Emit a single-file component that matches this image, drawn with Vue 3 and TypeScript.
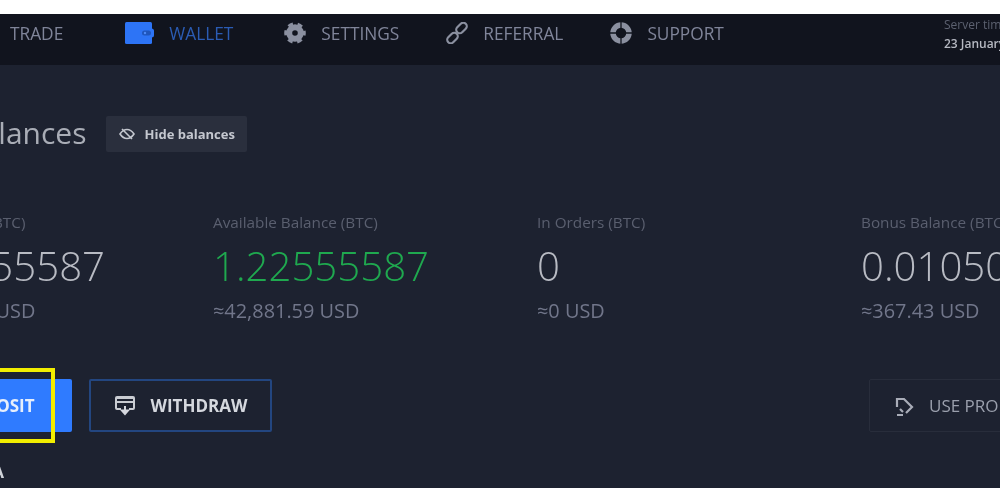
<template>
  <div class="page">
    <header class="topbar">
      <nav class="nav-list">
        <a class="nav-item trade">TRADE</a>
        <a class="nav-item active">
          <svg viewBox="0 0 29 22" width="29" height="22">
            <rect width="27" height="22" rx="1.500" fill="#2d74f6" />
            <rect x="16" y="6.500" width="13" height="9" rx="2.500" fill="#2d74f6" />
            <rect x="17" y="8.500" width="9" height="5" rx="2.500" fill="#1f56bd" />
            <circle cx="20" cy="11" r="1.200" fill="#4d8bf8" />
          </svg>
          WALLET
        </a>
        <a class="nav-item settings">
          <svg viewBox="0 0 22 22" width="22" height="22">
            <circle cx="11" cy="11" r="5.800" fill="none" stroke="#8b90a0" stroke-width="6" />
            <circle cx="11" cy="11" r="9.300" fill="none" stroke="#8b90a0" stroke-width="3" stroke-dasharray="5 4.740" stroke-dashoffset="2.500" />
          </svg>
          SETTINGS
        </a>
        <a class="nav-item">
          <svg viewBox="0 0 22 22" width="22" height="22" fill="none" stroke="#8b90a0" stroke-width="2.200">
            <rect x="9.500" y="2.500" width="12" height="7" rx="3.500" transform="rotate(-45 15.500 6)" />
            <rect x="0.500" y="12.500" width="12" height="7" rx="3.500" transform="rotate(-45 6.500 16)" />
          </svg>
          REFERRAL
        </a>
        <a class="nav-item">
          <svg viewBox="0 0 22 22" width="22" height="22">
            <circle cx="11" cy="11" r="8" fill="none" stroke="#8b90a0" stroke-width="5.500" />
            <path d="M11 0v6M11 16v6M0 11h6M16 11h6" stroke="#11141e" stroke-width="1.300" />
          </svg>
          SUPPORT
        </a>
      </nav>
      <div class="server-time">
        <span class="server-label">Server time</span>
        <span class="server-date">23 January 2021</span>
      </div>
    </header>

    <main class="content">
      <div class="title-row">
        <h1 class="title">Your Balances</h1>
        <button class="hide-btn">
          <svg viewBox="0 0 16 14" width="16" height="14" fill="none" stroke="#c4c7cf" stroke-width="1.600">
            <path d="M1 7c2-3 4.500-4.500 7-4.500S13 4 15 7c-2 3-4.500 4.500-7 4.500S3 10 1 7z" />
            <path d="M3 2l10 10" />
          </svg>
          Hide balances
        </button>
      </div>

      <div class="stats">
        <div v-for="s in stats" :key="s.label" class="stat">
          <div class="stat-label">{{ s.label }}</div>
          <div class="stat-value" :class="{ green: s.green }">{{ s.value }}</div>
          <div class="stat-usd">{{ s.usd }}</div>
        </div>
      </div>

      <div class="actions">
        <div class="deposit-wrap">
          <button class="btn deposit">
            <svg viewBox="0 0 22 22" width="22" height="22" fill="#fff">
              <path d="M3 6h16a2 2 0 0 1 2 2v10a2 2 0 0 1-2 2H3a2 2 0 0 1-2-2V8a2 2 0 0 1 2-2z" />
            </svg>
            DEPOSIT
          </button>
          <span class="highlight"></span>
        </div>
        <button class="btn withdraw">
          <svg viewBox="0 0 22 22" width="22" height="22">
            <path d="M3 1h16a2 2 0 0 1 2 2v10a2 2 0 0 1-2 2h-4v-2h4V8H3v5h4v2H3a2 2 0 0 1-2-2V3a2 2 0 0 1 2-2z" fill="#c9ccd2" />
            <rect x="3" y="4" width="16" height="2" fill="#1d2230" />
            <path d="M11 11v6M8 15.500l3 3.500 3-3.500z" stroke="#d5d8de" stroke-width="2" fill="#d5d8de" />
          </svg>
          WITHDRAW
        </button>
        <button class="btn promo">
          <svg viewBox="0 0 22 22" width="22" height="22" fill="none" stroke="#a9adb8" stroke-width="2.200">
            <path d="M4 12V4h7l8 8-6 6" />
            <path d="M7 14l3 3M4 20h6" />
          </svg>
          USE PROMO CODE
        </button>
      </div>

      <h2 class="section-title">WALLET DATA</h2>
    </main>
  </div>
</template>

<script setup lang="ts">
interface Stat {
  label: string
  value: string
  usd: string
  green?: boolean
}

const stats: Stat[] = [
  { label: 'Total Balance (BTC)', value: '1.22555587', usd: '≈42,881.59 USD' },
  { label: 'Available Balance (BTC)', value: '1.22555587', usd: '≈42,881.59 USD', green: true },
  { label: 'In Orders (BTC)', value: '0', usd: '≈0 USD' },
  { label: 'Bonus Balance (BTC)', value: '0.01050000', usd: '≈367.43 USD' },
]
</script>

<style>
html,
body {
  margin: 0;
  background: #fff;
  overflow: hidden;
}
</style>

<style scoped>
.page {
  width: 1000px;
  height: 500px;
  box-sizing: border-box;
  padding: 14px 0 12px;
  display: flex;
  flex-direction: column;
  overflow: hidden;
  font-family: "Open Sans", sans-serif;
  filter: blur(0.7px);
}

.topbar {
  height: 51px;
  flex: none;
  background: #11141e;
  display: flex;
  justify-content: space-between;
  align-items: center;
}

.nav-list {
  display: flex;
  align-items: center;
  gap: 47px;
  margin-left: 10px;
  padding-bottom: 13px;
}

.nav-item {
  display: flex;
  align-items: center;
  gap: 15px;
  color: #80859a;
  font-size: 17.300px;
  white-space: nowrap;
}

.nav-item.trade {
  margin-right: 15px;
}

.nav-item.active {
  color: #2b5cb4;
}

.nav-item.settings {
  margin-left: 4px;
}

.server-time {
  width: 56px;
  align-self: flex-start;
  display: flex;
  flex-direction: column;
  gap: 4px;
  overflow: hidden;
  white-space: nowrap;
  font-size: 12px;
  line-height: 15px;
  margin-top: 3px;
}

.server-label {
  color: #5c6170;
}

.server-date {
  color: #b6b9c2;
  font-weight: 600;
}

.content {
  flex: 1;
  min-height: 0;
  background: #1d2230;
  margin-left: -111px;
  width: 1111px;
  overflow: hidden;
}

.title-row {
  display: flex;
  align-items: center;
  gap: 20px;
  margin-top: 51px;
  height: 36px;
}

.title {
  margin: 0 0 4px;
  font-size: 30px;
  font-weight: 400;
  color: #a9adb6;
  white-space: nowrap;
}

.hide-btn {
  display: flex;
  align-items: center;
  gap: 9px;
  height: 36px;
  width: 141px;
  padding: 0 0 0 13px;
  border: none;
  border-radius: 2px;
  background: #2a2f3d;
  color: #c4c7cf;
  font-family: inherit;
  font-size: 13px;
  font-weight: 700;
  white-space: nowrap;
}

.stats {
  display: grid;
  grid-template-columns: repeat(4, 324px);
  margin-top: 61px;
}

.stat {
  white-space: nowrap;
}

.stat-label {
  font-size: 15.300px;
  line-height: 18px;
  color: #5a5f6f;
}

.stat-value {
  font-size: 40.200px;
  font-weight: 300;
  line-height: 52px;
  margin-top: 9px;
  color: #b8bbc3;
}

.stat-value.green {
  color: #1fa94f;
}

.stat-usd {
  font-size: 19.900px;
  line-height: 22px;
  margin-top: 8px;
  color: #71768a;
}

.actions {
  display: flex;
  gap: 17px;
  margin-top: 57px;
}

.btn {
  display: flex;
  flex: none;
  align-items: center;
  justify-content: center;
  gap: 15px;
  width: 183px;
  height: 53px;
  box-sizing: border-box;
  border-radius: 2px;
  font-family: inherit;
  font-size: 17px;
  font-weight: 700;
  white-space: nowrap;
}

.deposit-wrap {
  position: relative;
  flex: none;
}

.deposit {
  border: none;
  background: #2f7bff;
  color: #e6eefc;
}

.highlight {
  position: absolute;
  right: 17px;
  top: -11px;
  width: 100px;
  height: 75px;
  border: 4px solid #f2ee00;
  box-sizing: border-box;
}

.withdraw {
  background: transparent;
  border: 2px solid #234680;
  color: #d5d8de;
}

.promo {
  margin-left: 580px;
  width: 260px;
  background: transparent;
  border: 1px solid #282d3b;
  color: #9a9fac;
  font-weight: 400;
  justify-content: flex-start;
  gap: 14px;
  padding-left: 23px;
}

.section-title {
  margin: 28px 0 0;
  font-size: 16.700px;
  line-height: 24px;
  font-weight: 700;
  color: #cfd2d8;
  white-space: nowrap;
}
</style>
